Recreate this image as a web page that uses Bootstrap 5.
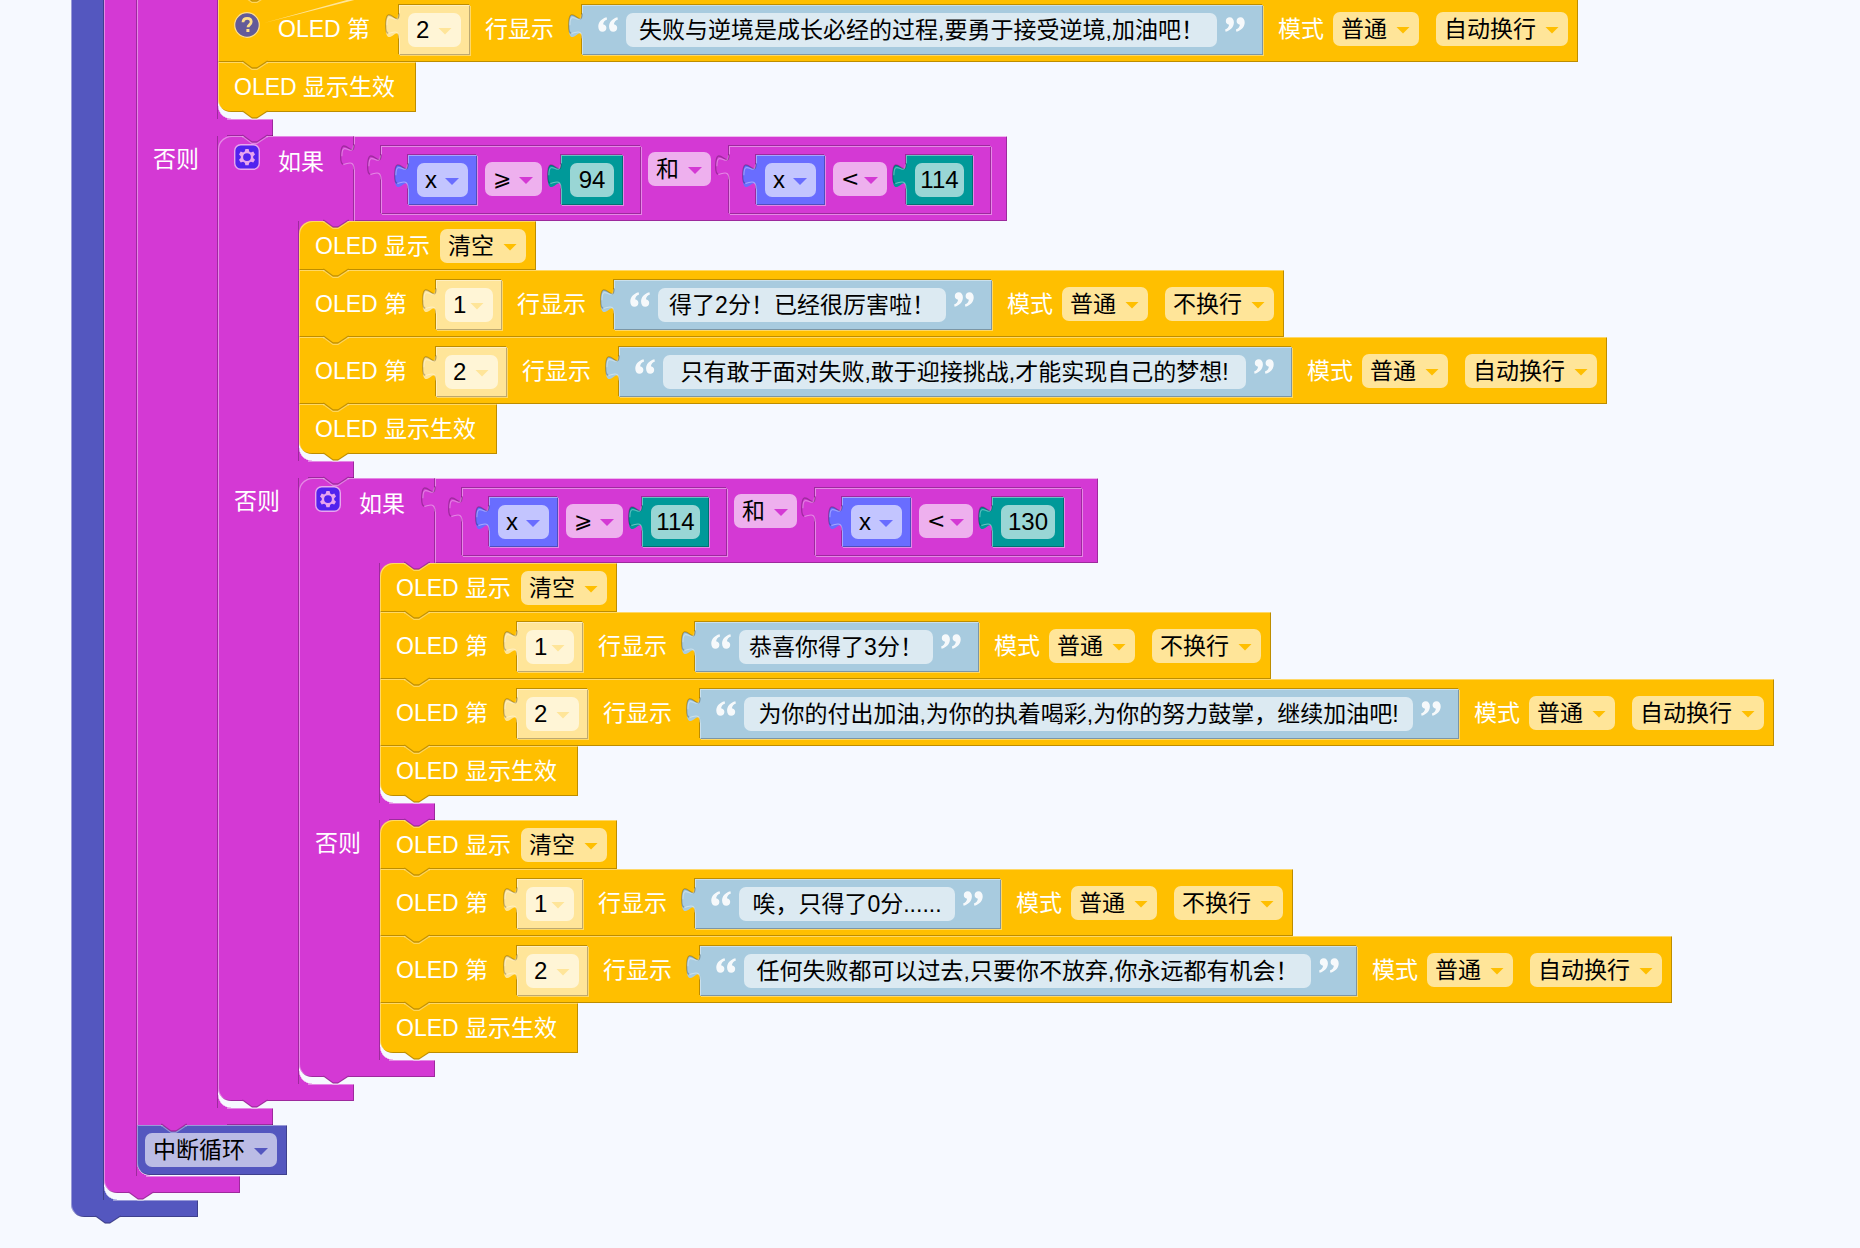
<!DOCTYPE html>
<html lang="zh-CN">
<head>
<meta charset="utf-8">
<meta name="viewport" content="width=device-width, initial-scale=1">
<title>积木编程工作区</title>
<link rel="stylesheet" href="https://cdn.jsdelivr.net/npm/bootstrap@5.3.0/dist/css/bootstrap.min.css">
<script src="https://cdn.jsdelivr.net/npm/bootstrap@5.3.0/dist/js/bootstrap.bundle.min.js"></script>
<style>
  :root { --hi: rgba(255,255,255,.4); --lo: rgba(0,0,0,.26); --paper: #f6f9ff; }
  body { background: var(--paper); font-family: "Liberation Sans", "Noto Sans CJK SC", sans-serif; font-size: 23px; line-height: 34px; overflow: hidden; }
  .workspace { padding: 0 0 20px 71px; margin-top: -5px; white-space: nowrap; color: #fff; }

  /* block colours: block, field, dropdown arrow */
  .c-oled { --c: #ffbf00; --f: #ffe599; }
  .c-logic { --c: #d439d4; --f: #eeb0ee; }
  .c-loop { --c: #5457bf; --f: #bbbce5; }
  .c-var { --c: #696dff; --f: #c3c5ff; }
  .c-num { --c: #009999; --f: #99d6d5; }
  .c-line { --c: #ffe599; --f: #fff5d6; }
  .c-str { --c: #a8cbdf; --f: #dceaf2; }

  /* container blocks */
  .cblk, .stmt, .value, .arm, .head, .joint { position: relative; }
  .cblk { display: flex; flex-direction: column; align-items: flex-start; }
  .rail { flex: none; width: 81px; background: var(--c); box-shadow: inset 1px 0 var(--hi), inset -1px 0 var(--lo); padding: 6px 0 0 16px; }
  .rail.thin { width: 33px; }
  .mouth { padding-bottom: 7px; background:
      linear-gradient(var(--c), var(--c)) left top / 13px 13px no-repeat,
      radial-gradient(circle at 100% 0, transparent 12px, var(--hi) 12px, var(--hi) 13px, transparent 13px) left bottom / 13px 13px no-repeat,
      radial-gradient(circle at 100% 0, transparent 12px, var(--c) 13px) left bottom / 13px 13px no-repeat; }
  .mouth.snug { padding-bottom: 1px; }
  .arm { width: 136px; height: 17px; background: var(--c); box-shadow: inset -1px 0 var(--lo), inset 1px 0 var(--hi); }
  .arm::before { content: ""; position: absolute; left: 90px; right: 0; top: 0; height: 1px; background: var(--hi); }
  .arm::after { content: ""; position: absolute; left: 90px; right: 0; bottom: 0; height: 1px; background: var(--lo); }
  .arm.thin::before { left: 42px; }
  .arm.foot::after { display: none; }
  .arm.foot { border-bottom-left-radius: 13px; box-shadow: inset -1px -1px var(--lo), inset 1px 0 var(--hi); }
  .arm.short { width: 127px; }
  .head { height: 85px; display: flex; align-items: flex-start; background: var(--c); border-top-left-radius: 13px; box-shadow: inset 1px 1px var(--hi); }
  .gear { width: 26px; height: 26px; margin: 8px 18px 0 16px; }
  .if-word { width: 76px; margin-top: 9px; }

  /* plain statements */
  .stmt { display: flex; align-items: center; width: max-content; height: 67px; padding: 0 10px 0 16px; background: var(--c); box-shadow: inset 1px 1px var(--hi), inset -1px -1px var(--lo); }
  .stmt.top { height: 49px; border-top-left-radius: 13px; gap: 10px; }
  .stmt.end { height: 50px; border-bottom-left-radius: 13px; padding-right: 21px; }
  .stmt.brk { height: 50px; padding: 0 10px 0 8px; border-bottom-left-radius: 13px; }
  .nth { width: 121px; }
  .shows { padding: 0 28px 0 15px; }
  .mode { padding: 0 9px 0 15px; }
  .hint { width: 26px; height: 26px; margin: -8px 18px 0 0; }

  .notch { position: absolute; left: 24px; top: calc(100% - 2px); width: 26px; height: 11px; z-index: 2; fill: var(--c); }
  .notch.deep { left: 105px; }
  .notch.over { top: -2px; }
  .tab { position: absolute; left: -14px; top: 8px; width: 16px; height: 26px; fill: var(--c); z-index: 1; }

  /* value blocks */
  .value { display: flex; align-items: center; height: 50px; padding: 0 9px; background: var(--c); margin-top: 2px; box-shadow: inset 1px 1px var(--hi), inset -1px -1px var(--lo), -1px -1px var(--lo), 1px 1px var(--hi); }
  .value.c-str { padding: 0 18px 0 16px; }
  .joint { display: flex; align-items: flex-start; height: 85px; padding: 0 16px 0 27px; box-shadow: inset 1px 1px var(--hi), inset -1px -1px var(--lo), -1px 0 var(--lo); }
  .cmp { align-items: flex-start; height: 68px; margin-top: 10px; padding: 0 18px 0 27px; }
  .cmp > .value { margin-top: 9px; }
  .cmp > .pick { margin: 16px 19px 0 8px; }
  .joint > .pick { margin: 16px 18px 0 7px; }

  /* fields */
  .pick { position: relative; display: inline-flex; }
  .pick::after { content: ""; position: absolute; right: 9px; top: 15px; width: 14px; height: 7px; background: var(--c); clip-path: polygon(0 0, 100% 0, 50% 100%); pointer-events: none; }
  .pick select, .txt { height: 34px; border: 0; border-radius: 7px; background: var(--f); color: #000; font: inherit; line-height: 34px; }
  .pick select { appearance: none; padding: 0 32px 0 8px; }
  .pick + .pick { margin-left: 17px; }
  .txt { padding: 0; text-align: center; }
  .txt.digits, .c-line select, .c-var select { font-size: 24px; }
  .c-line select { width: 53px; padding-right: 0; }
  .c-line.one select { width: 48px; }
  .c-var select { width: 51px; padding-right: 0; }
  .op select { font-family: "DejaVu Sans", sans-serif; font-size: 22px; width: 57px; padding-right: 0; }
  .op.lt select { width: 54px; }
  .d2 { width: 44px; } .d3 { width: 49px; } .d3w { width: 54px; }
  .q { width: 20px; height: 15px; fill: #fff; opacity: .9; margin: -10px 8px 0 0; }
  .q.close { margin: -10px 0 0 8px; }
  .s-lose { width: 591px; } .s-two { width: 288px; } .s-dream { width: 583px; } .s-three { width: 194px; }
  .s-cheer { width: 669px; } .s-zero { width: 216px; } .s-chance { width: 567px; }
  .tether { position: absolute; left: 46px; top: 0; width: 130px; height: 30px; }
</style>
</head>
<body>
<svg class="d-none" aria-hidden="true">
  <symbol id="notch" viewBox="0 0 26 11">
    <path d="M0 0H26V2H25L15 8.500H10L1 2H0Z"/>
    <path d="M0 1.500H1L10 8H15L25 1.500H26" fill="none" stroke="#000" stroke-opacity=".24" stroke-width="1.300"/>
    <path d="M0 2.800H1L10 9.400H15L25 2.800H26" fill="none" stroke="#fff" stroke-opacity=".36" stroke-width="1.300"/>
  </symbol>
  <symbol id="tab" viewBox="-8.400 4.700 9.600 15.600">
    <path d="M1.200 5H0c0 10-8-8-8 7.500s8-2.500 8 7.500H1.200Z"/>
    <path d="M0 5c0 10-8-8-8 7.500q0 4 1.600 4.400" fill="none" stroke="#000" stroke-opacity=".25" stroke-width=".8"/>
    <path d="M-.3 5.500c-.3 8-6.900-4-7 6.500" fill="none" stroke="#fff" stroke-opacity=".34" stroke-width=".7"/>
    <path d="M-6.400 16.900c2.400-.3 6.400-2.900 6.400 3.100" fill="none" stroke="#fff" stroke-opacity=".4" stroke-width=".7"/>
  </symbol>
  <symbol id="qopen" viewBox="0 0 20 15">
    <path d="M8.600.2C3.400 1.600.3 5 .3 9.700c0 3 1.700 5 4.200 5 2.200 0 3.900-1.600 3.900-3.800 0-2-1.400-3.500-3.300-3.700.3-2.300 1.700-3.900 4-4.800ZM19.400.2c-5.200 1.400-8.300 4.800-8.300 9.500 0 3 1.700 5 4.200 5 2.200 0 3.900-1.600 3.900-3.800 0-2-1.400-3.500-3.300-3.700.3-2.300 1.700-3.900 4-4.800Z"/>
  </symbol>
  <symbol id="qclose" viewBox="0 0 20 15">
    <path transform="rotate(180 10 7.500)" d="M8.600.2C3.400 1.600.3 5 .3 9.700c0 3 1.700 5 4.200 5 2.200 0 3.900-1.600 3.900-3.800 0-2-1.400-3.500-3.300-3.700.3-2.300 1.700-3.900 4-4.800ZM19.400.2c-5.200 1.400-8.300 4.800-8.300 9.500 0 3 1.700 5 4.200 5 2.200 0 3.900-1.600 3.900-3.800 0-2-1.400-3.500-3.300-3.700.3-2.300 1.700-3.900 4-4.800Z"/>
  </symbol>
  <symbol id="gear" viewBox="0 0 26 26">
    <rect x=".7" y=".7" width="24.600" height="24.600" rx="6" fill="#5122ee" stroke="#e9a6ee" stroke-width="1.400"/>
    <path fill="#e8a5ee" fill-rule="evenodd" d="M11.400 5h3.200l.6 2.400 1.700 1 2.400-.8 1.700 2.900-1.800 1.700v1.800l1.800 1.700-1.700 2.900-2.400-.8-1.700 1-.6 2.400h-3.200l-.6-2.400-1.700-1-2.400.8L5 15.700 6.800 14v-1.800L5 10.500l1.700-2.900 2.400.8 1.700-1ZM13 9.200a3.900 3.900 0 1 0 0 7.800 3.900 3.900 0 0 0 0-7.800Z"/>
  </symbol>
</svg>

<main class="workspace">
 <div class="cblk c-loop">
  <div class="d-flex">
   <div class="rail thin"></div>
   <div class="mouth">
    <div class="cblk c-logic">
     <div class="d-flex">
      <div class="rail thin"></div>
      <div class="mouth snug">

       <div class="cblk c-logic">
        <div class="d-flex">
         <div class="rail"></div>
         <div class="mouth">
          <div class="stmt c-oled">
            <svg class="notch over"><use href="#notch"/></svg>
            <svg class="tether" viewBox="0 0 130 30"><path d="M0 28L101 0H110Z" fill="#fff" fill-opacity=".6"/></svg>
            <svg class="hint" viewBox="0 0 26 26" role="img" aria-label="帮助"><circle cx="13" cy="13" r="12.300" fill="#635b99" stroke="#ffe08a" stroke-width="1.200"/><path d="M9 10.300c.1-2.600 1.700-4 4.200-4 2.400 0 4 1.300 4 3.500 0 3-3.200 3-3.200 5.400" fill="none" stroke="#ffe08a" stroke-width="2.800"/><rect x="12.400" y="17" width="3" height="3" fill="#ffe08a"/></svg>
            <span class="nth">OLED 第</span>
            <span class="value c-line"><svg class="tab"><use href="#tab"/></svg><span class="pick"><select aria-label="行号"><option>2</option></select></span></span>
            <span class="shows">行显示</span>
            <span class="value c-str"><svg class="tab"><use href="#tab"/></svg><svg class="q"><use href="#qopen"/></svg><input class="txt s-lose" aria-label="文本" value="失败与逆境是成长必经的过程,要勇于接受逆境,加油吧！"><svg class="q close"><use href="#qclose"/></svg></span>
            <span class="mode">模式</span>
            <span class="pick"><select aria-label="模式"><option>普通</option></select></span><span class="pick"><select aria-label="换行"><option>自动换行</option></select></span>
            <svg class="notch"><use href="#notch"/></svg>
          </div>
          <div class="stmt end c-oled">OLED 显示生效<svg class="notch"><use href="#notch"/></svg></div>
         </div>
        </div>
        <div class="arm"><svg class="notch deep"><use href="#notch"/></svg></div>
        <div class="d-flex">
         <div class="rail">否则</div>
         <div class="mouth">

          <div class="cblk c-logic">
           <div class="head">
             <svg class="gear" role="img" aria-label="设置"><use href="#gear"/></svg>
             <span class="if-word">如果</span>
             <div class="joint"><svg class="tab"><use href="#tab"/></svg>
               <div class="value cmp"><svg class="tab"><use href="#tab"/></svg>
                 <span class="value c-var"><svg class="tab"><use href="#tab"/></svg><span class="pick"><select aria-label="变量"><option>x</option></select></span></span>
                 <span class="pick op"><select aria-label="比较"><option>⩾</option></select></span>
                 <span class="value c-num"><svg class="tab"><use href="#tab"/></svg><input class="txt digits d2" aria-label="数值" value="94"></span>
               </div>
               <span class="pick"><select aria-label="逻辑"><option>和</option></select></span>
               <div class="value cmp"><svg class="tab"><use href="#tab"/></svg>
                 <span class="value c-var"><svg class="tab"><use href="#tab"/></svg><span class="pick"><select aria-label="变量"><option>x</option></select></span></span>
                 <span class="pick op lt"><select aria-label="比较"><option>&lt;</option></select></span>
                 <span class="value c-num"><svg class="tab"><use href="#tab"/></svg><input class="txt digits d3" aria-label="数值" value="114"></span>
               </div>
             </div>
             <svg class="notch deep"><use href="#notch"/></svg>
           </div>
           <div class="d-flex">
            <div class="rail"></div>
            <div class="mouth">
             <div class="stmt top c-oled"><span>OLED 显示</span><span class="pick"><select aria-label="显示操作"><option>清空</option></select></span><svg class="notch"><use href="#notch"/></svg></div>
             <div class="stmt c-oled">
               <span class="nth">OLED 第</span>
               <span class="value c-line one"><svg class="tab"><use href="#tab"/></svg><span class="pick"><select aria-label="行号"><option>1</option></select></span></span>
               <span class="shows">行显示</span>
               <span class="value c-str"><svg class="tab"><use href="#tab"/></svg><svg class="q"><use href="#qopen"/></svg><input class="txt s-two" aria-label="文本" value="得了2分！已经很厉害啦！"><svg class="q close"><use href="#qclose"/></svg></span>
               <span class="mode">模式</span>
               <span class="pick"><select aria-label="模式"><option>普通</option></select></span><span class="pick"><select aria-label="换行"><option>不换行</option></select></span>
               <svg class="notch"><use href="#notch"/></svg>
             </div>
             <div class="stmt c-oled">
               <span class="nth">OLED 第</span>
               <span class="value c-line"><svg class="tab"><use href="#tab"/></svg><span class="pick"><select aria-label="行号"><option>2</option></select></span></span>
               <span class="shows">行显示</span>
               <span class="value c-str"><svg class="tab"><use href="#tab"/></svg><svg class="q"><use href="#qopen"/></svg><input class="txt s-dream" aria-label="文本" value="只有敢于面对失败,敢于迎接挑战,才能实现自己的梦想!"><svg class="q close"><use href="#qclose"/></svg></span>
               <span class="mode">模式</span>
               <span class="pick"><select aria-label="模式"><option>普通</option></select></span><span class="pick"><select aria-label="换行"><option>自动换行</option></select></span>
               <svg class="notch"><use href="#notch"/></svg>
             </div>
             <div class="stmt end c-oled">OLED 显示生效<svg class="notch"><use href="#notch"/></svg></div>
            </div>
           </div>
           <div class="arm"><svg class="notch deep"><use href="#notch"/></svg></div>
           <div class="d-flex">
            <div class="rail">否则</div>
            <div class="mouth">

             <div class="cblk c-logic">
              <div class="head">
                <svg class="gear" role="img" aria-label="设置"><use href="#gear"/></svg>
                <span class="if-word">如果</span>
                <div class="joint"><svg class="tab"><use href="#tab"/></svg>
                  <div class="value cmp"><svg class="tab"><use href="#tab"/></svg>
                    <span class="value c-var"><svg class="tab"><use href="#tab"/></svg><span class="pick"><select aria-label="变量"><option>x</option></select></span></span>
                    <span class="pick op"><select aria-label="比较"><option>⩾</option></select></span>
                    <span class="value c-num"><svg class="tab"><use href="#tab"/></svg><input class="txt digits d3" aria-label="数值" value="114"></span>
                  </div>
                  <span class="pick"><select aria-label="逻辑"><option>和</option></select></span>
                  <div class="value cmp"><svg class="tab"><use href="#tab"/></svg>
                    <span class="value c-var"><svg class="tab"><use href="#tab"/></svg><span class="pick"><select aria-label="变量"><option>x</option></select></span></span>
                    <span class="pick op lt"><select aria-label="比较"><option>&lt;</option></select></span>
                    <span class="value c-num"><svg class="tab"><use href="#tab"/></svg><input class="txt digits d3w" aria-label="数值" value="130"></span>
                  </div>
                </div>
                <svg class="notch deep"><use href="#notch"/></svg>
              </div>
              <div class="d-flex">
               <div class="rail"></div>
               <div class="mouth">
                <div class="stmt top c-oled"><span>OLED 显示</span><span class="pick"><select aria-label="显示操作"><option>清空</option></select></span><svg class="notch"><use href="#notch"/></svg></div>
                <div class="stmt c-oled">
                  <span class="nth">OLED 第</span>
                  <span class="value c-line one"><svg class="tab"><use href="#tab"/></svg><span class="pick"><select aria-label="行号"><option>1</option></select></span></span>
                  <span class="shows">行显示</span>
                  <span class="value c-str"><svg class="tab"><use href="#tab"/></svg><svg class="q"><use href="#qopen"/></svg><input class="txt s-three" aria-label="文本" value="恭喜你得了3分！"><svg class="q close"><use href="#qclose"/></svg></span>
                  <span class="mode">模式</span>
                  <span class="pick"><select aria-label="模式"><option>普通</option></select></span><span class="pick"><select aria-label="换行"><option>不换行</option></select></span>
                  <svg class="notch"><use href="#notch"/></svg>
                </div>
                <div class="stmt c-oled">
                  <span class="nth">OLED 第</span>
                  <span class="value c-line"><svg class="tab"><use href="#tab"/></svg><span class="pick"><select aria-label="行号"><option>2</option></select></span></span>
                  <span class="shows">行显示</span>
                  <span class="value c-str"><svg class="tab"><use href="#tab"/></svg><svg class="q"><use href="#qopen"/></svg><input class="txt s-cheer" aria-label="文本" value="为你的付出加油,为你的执着喝彩,为你的努力鼓掌，继续加油吧!"><svg class="q close"><use href="#qclose"/></svg></span>
                  <span class="mode">模式</span>
                  <span class="pick"><select aria-label="模式"><option>普通</option></select></span><span class="pick"><select aria-label="换行"><option>自动换行</option></select></span>
                  <svg class="notch"><use href="#notch"/></svg>
                </div>
                <div class="stmt end c-oled">OLED 显示生效<svg class="notch"><use href="#notch"/></svg></div>
               </div>
              </div>
              <div class="arm"><svg class="notch deep"><use href="#notch"/></svg></div>
              <div class="d-flex">
               <div class="rail">否则</div>
               <div class="mouth">
                <div class="stmt top c-oled"><span>OLED 显示</span><span class="pick"><select aria-label="显示操作"><option>清空</option></select></span><svg class="notch"><use href="#notch"/></svg></div>
                <div class="stmt c-oled">
                  <span class="nth">OLED 第</span>
                  <span class="value c-line one"><svg class="tab"><use href="#tab"/></svg><span class="pick"><select aria-label="行号"><option>1</option></select></span></span>
                  <span class="shows">行显示</span>
                  <span class="value c-str"><svg class="tab"><use href="#tab"/></svg><svg class="q"><use href="#qopen"/></svg><input class="txt s-zero" aria-label="文本" value="唉，只得了0分......"><svg class="q close"><use href="#qclose"/></svg></span>
                  <span class="mode">模式</span>
                  <span class="pick"><select aria-label="模式"><option>普通</option></select></span><span class="pick"><select aria-label="换行"><option>不换行</option></select></span>
                  <svg class="notch"><use href="#notch"/></svg>
                </div>
                <div class="stmt c-oled">
                  <span class="nth">OLED 第</span>
                  <span class="value c-line"><svg class="tab"><use href="#tab"/></svg><span class="pick"><select aria-label="行号"><option>2</option></select></span></span>
                  <span class="shows">行显示</span>
                  <span class="value c-str"><svg class="tab"><use href="#tab"/></svg><svg class="q"><use href="#qopen"/></svg><input class="txt s-chance" aria-label="文本" value="任何失败都可以过去,只要你不放弃,你永远都有机会！"><svg class="q close"><use href="#qclose"/></svg></span>
                  <span class="mode">模式</span>
                  <span class="pick"><select aria-label="模式"><option>普通</option></select></span><span class="pick"><select aria-label="换行"><option>自动换行</option></select></span>
                  <svg class="notch"><use href="#notch"/></svg>
                </div>
                <div class="stmt end c-oled">OLED 显示生效<svg class="notch"><use href="#notch"/></svg></div>
               </div>
              </div>
              <div class="arm foot"><svg class="notch"><use href="#notch"/></svg></div>
             </div>

            </div>
           </div>
           <div class="arm foot"><svg class="notch"><use href="#notch"/></svg></div>
          </div>

         </div>
        </div>
        <div class="arm"><svg class="notch"><use href="#notch"/></svg></div>
       </div>
       <div class="stmt brk c-loop"><span class="pick"><select aria-label="循环控制"><option>中断循环</option></select></span></div>

      </div>
     </div>
     <div class="arm foot thin"><svg class="notch"><use href="#notch"/></svg></div>
    </div>
   </div>
  </div>
  <div class="arm foot thin short"><svg class="notch"><use href="#notch"/></svg></div>
 </div>
</main>
</body>
</html>
